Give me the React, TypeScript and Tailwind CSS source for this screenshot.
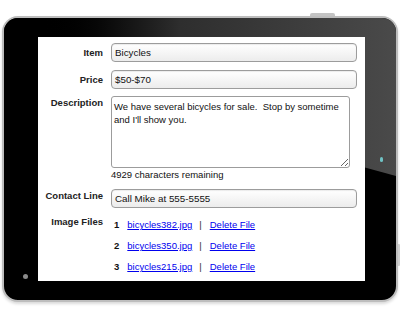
const files = [
  { n: 1, name: "bicycles382.jpg" },
  { n: 2, name: "bicycles350.jpg" },
  { n: 3, name: "bicycles215.jpg" },
];

const Field = ({ value }: { value: string }) => (
  <div className="h-[19px] flex items-center pl-[3px] rounded-[4px] border border-[#9c9c9c] bg-gradient-to-b from-white to-[#ececec] text-[9.8px] text-[#111] shadow-[inset_0_1px_1px_rgba(0,0,0,0.08)]">
    {value}
  </div>
);

export default function App() {
  return (
    <div className="w-[400px] h-[316px] bg-white pt-[16px] pl-[2px] font-['Liberation_Sans',Arial,sans-serif]">
      <div className="relative w-[396px] h-[286px] rounded-[16px] border-2 border-[#bdbdbd] bg-black pt-[19px] pl-[34px] shadow-[0_2px_3px_rgba(0,0,0,0.15)]">
        {/* glossy reflection on the bezel */}
        <div className="absolute inset-0 rounded-[14px] bg-gradient-to-r from-[#000] from-[8%] via-[#2e2e2e] via-[45%] to-[#4a4a4a] [clip-path:polygon(0_0,100%_0,100%_56%,0_18%)]" />
        {/* top button */}
        <div className="absolute -top-[5px] left-[306px] w-[25px] h-[3px] rounded-t-[2px] bg-[#c4c4c4]" />
        {/* side button */}
        <div className="absolute -right-[4px] top-[226px] w-[2px] h-[22px] rounded-r-[1px] bg-[#cfcfcf]" />
        {/* camera */}
        <div className="absolute left-[376px] top-[139px] w-[3px] h-[5px] rounded-full bg-[#6fc2c4]" />
        {/* home dot */}
        <div className="absolute left-[19px] top-[256px] w-[5px] h-[5px] rounded-full bg-[#8a8a8a]" />

        <div className="relative w-[327px] h-[244px] bg-white pt-[6px] pr-[8px] text-[9.5px] leading-[11px] text-[#111]">
          <div className="flex items-center">
            <div className="w-[65px] text-right font-bold text-[#222]">Item</div>
            <div className="ml-[8px] flex-1">
              <Field value="Bicycles" />
            </div>
          </div>

          <div className="flex items-center mt-[8px]">
            <div className="w-[65px] text-right font-bold text-[#222]">Price</div>
            <div className="ml-[8px] flex-1">
              <Field value="$50-$70" />
            </div>
          </div>

          <div className="flex items-start mt-[7px]">
            <div className="w-[65px] pt-[1px] text-right font-bold text-[#222]">Description</div>
            <div className="ml-[8px] flex-1">
              <textarea
                readOnly
                value={"We have several bicycles for sale.  Stop by sometime and I'll show you."}
                className="block w-[239px] h-[72px] pl-[2px] pt-[3px] rounded-[3px] border border-[#9c9c9c] bg-white text-[9.5px] leading-[13px] text-[#111] outline-none"
              />
              <div className="mt-[1px] leading-[12px] text-[#111]">4929 characters remaining</div>
            </div>
          </div>

          <div className="flex items-start mt-[8px]">
            <div className="w-[65px] pt-[1px] text-right font-bold text-[#222] whitespace-nowrap">Contact Line</div>
            <div className="ml-[8px] flex-1">
              <Field value="Call Mike at 555-5555" />
            </div>
          </div>

          <div className="flex items-start mt-[7px]">
            <div className="w-[65px] pt-[1px] text-right font-bold text-[#222] whitespace-nowrap">Image Files</div>
            <div className="ml-[8px] -mt-[1px] flex-1 flex flex-col">
              {files.map((f) => (
                <div key={f.n} className="h-[21px] flex items-center">
                  <span className="ml-[3px] font-bold text-[#111]">{f.n}</span>
                  <a href="#" className="ml-[8px] text-[#0000ee] underline">{f.name}</a>
                  <span className="ml-[7px] text-[#333]">|</span>
                  <a href="#" className="ml-[8px] text-[#0000ee] underline">Delete File</a>
                </div>
              ))}
            </div>
          </div>
        </div>
      </div>
    </div>
  );
}
